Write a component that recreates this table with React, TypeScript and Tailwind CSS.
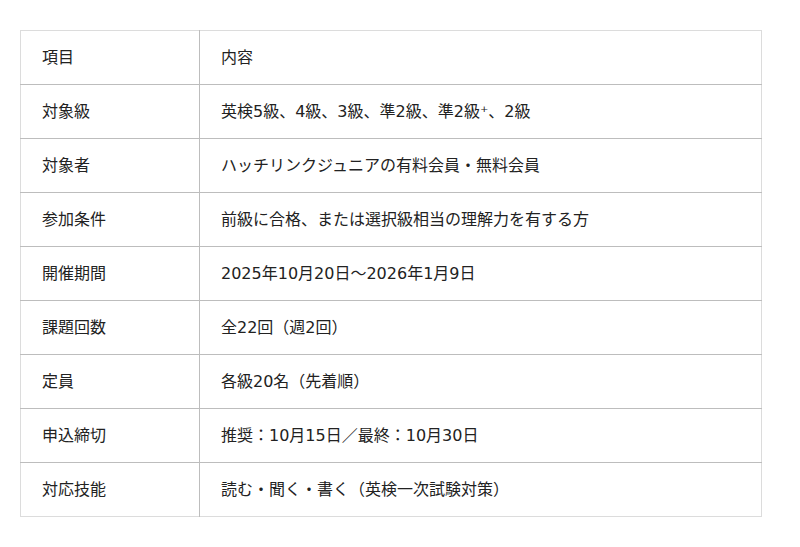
const rows: [string, string][] = [
  ['項目', '内容'],
  ['対象級', '英検5級、4級、3級、準2級、準2級⁺、2級'],
  ['対象者', 'ハッチリンクジュニアの有料会員・無料会員'],
  ['参加条件', '前級に合格、または選択級相当の理解力を有する方'],
  ['開催期間', '2025年10月20日～2026年1月9日'],
  ['課題回数', '全22回（週2回）'],
  ['定員', '各級20名（先着順）'],
  ['申込締切', '推奨：10月15日／最終：10月30日'],
  ['対応技能', '読む・聞く・書く（英検一次試験対策）'],
];

export default function App() {
  return (
    <div className="min-h-[547px] bg-white pt-[30px] pl-5 font-['DejaVu_Sans','Noto_Sans_CJK_JP',sans-serif] text-[16px] text-[#222]">
      <table className="w-[742px] border-collapse border border-[#dcdcdc]">
        <tbody>
          {rows.map(([k, v], i) => (
            <tr key={i} className={i > 0 ? 'border-t border-[#bdbdbd]' : ''}>
              <td className="h-[54px] w-[179px] border-r border-[#bdbdbd] px-[21px] align-middle">{k}</td>
              <td className="h-[54px] px-[21px] align-middle">{v}</td>
            </tr>
          ))}
        </tbody>
      </table>
    </div>
  );
}
